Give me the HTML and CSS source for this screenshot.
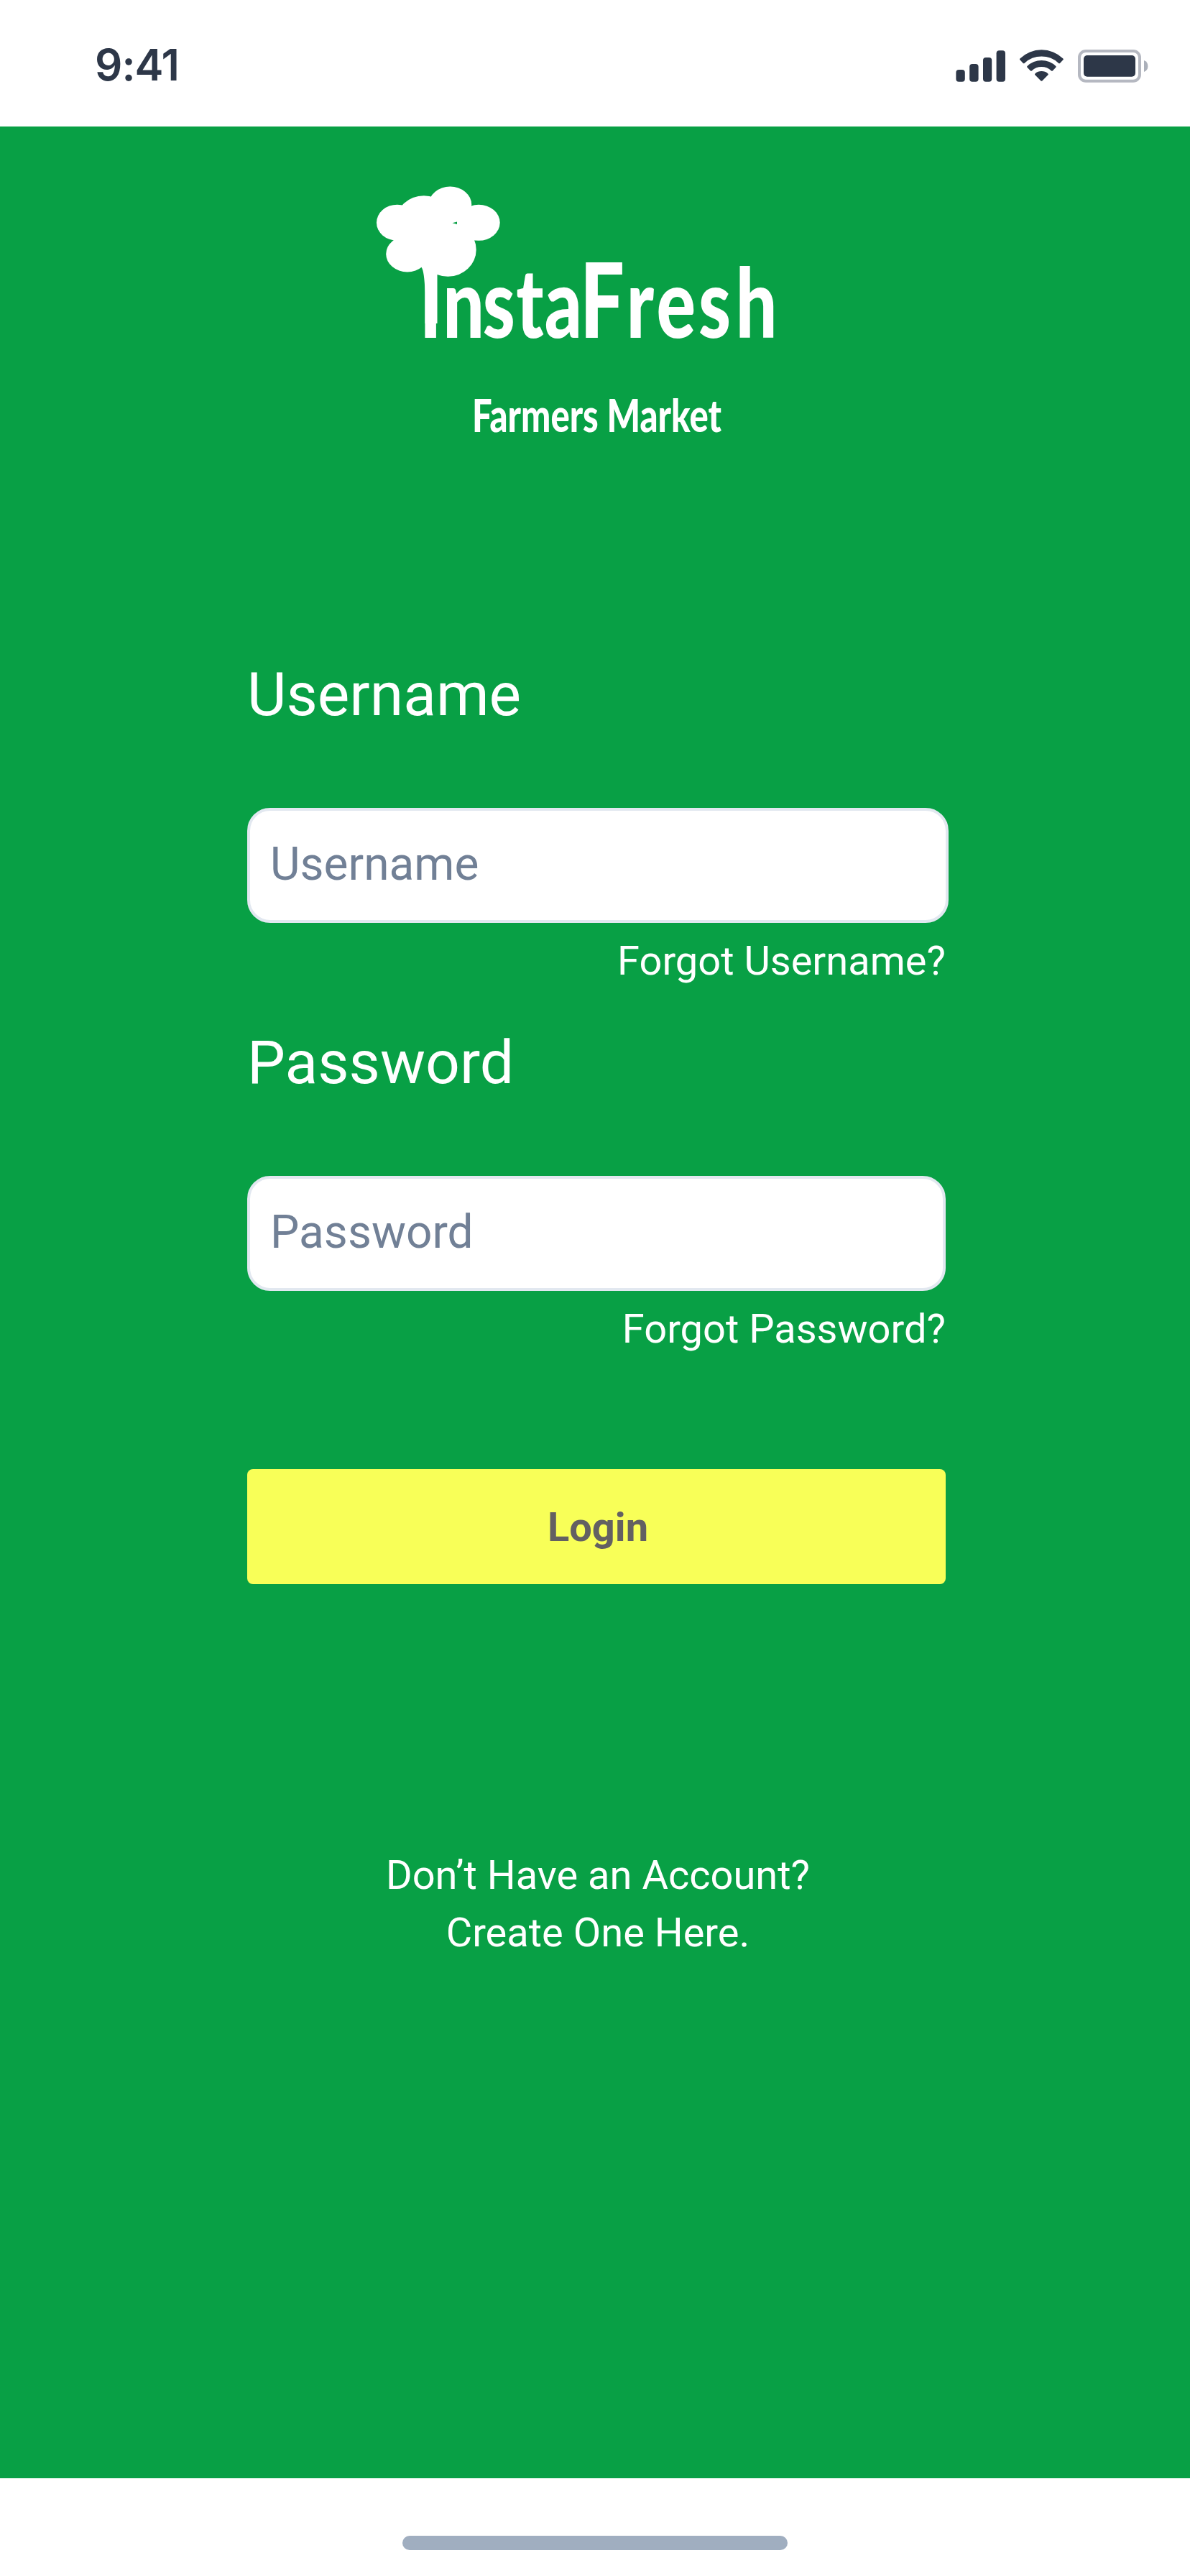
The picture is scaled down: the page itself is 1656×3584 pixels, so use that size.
FILE: index.html
```html
<!DOCTYPE html>
<html lang="en">
<head>
<meta charset="utf-8">
<title>InstaFresh Login</title>
<link rel="stylesheet" href="styles.css">
</head>
<body>
<header class="status-bar">
  <span class="time">9:41</span>
  <svg class="status-icons" width="270" height="50" viewBox="1330 67 270 50">
    <g fill="#2d3748">
      <rect x="1330.4" y="97" width="12.4" height="16.7" rx="4"/>
      <rect x="1349.2" y="89" width="12.4" height="24.7" rx="4"/>
      <rect x="1368" y="80" width="12.2" height="33.7" rx="4"/>
      <rect x="1386.6" y="70.3" width="12.4" height="43.4" rx="4"/>
      <path d="M1419.4 81.5a43 43 0 0 1 60 0q.9.9 0 1.8l-4.4 4.6q-.9.9-1.8 0a34.5 34.5 0 0 0-47.6 0q-.9.9-1.8 0l-4.4-4.6q-.9-.9 0-1.8z"/>
      <path d="M1429.5 92a28.5 28.5 0 0 1 39.8 0q.9.9 0 1.8l-4.5 4.6q-.9.9-1.8 0a20 20 0 0 0-27.2 0q-.9.9-1.8 0l-4.5-4.6q-.9-.9 0-1.8z"/>
      <path d="M1440.4 102.4a14 14 0 0 1 18 0q.9.9 0 1.8l-8.1 8.2q-.9.9-1.8 0l-8.1-8.2q-.9-.9 0-1.8z"/>
      <rect x="1508" y="77" width="72" height="29.8" rx="5"/>
    </g>
    <rect x="1502" y="71" width="84" height="41.8" rx="9" fill="none" stroke="#b5b8c1" stroke-width="4"/>
    <path d="M1592 84a8.6 8.6 0 0 1 0 16z" fill="#abb0ba"/>
  </svg>
</header>
<main class="screen">
  <svg class="logo" width="556" height="360" viewBox="524 256 556 360">
    <g fill="#fff">
      <ellipse cx="552.8" cy="309.7" rx="28.8" ry="25"/>
      <ellipse cx="666.2" cy="309.8" rx="29.5" ry="25"/>
      <ellipse cx="626.4" cy="284.6" rx="29.8" ry="25"/>
      <ellipse cx="566.8" cy="353.4" rx="29.6" ry="25"/>
      <ellipse cx="589.8" cy="309.4" rx="39.3" ry="37.2"/>
      <ellipse cx="623.4" cy="347.4" rx="39.3" ry="37.4"/>
      <path d="M575 300h70v30h-70z"/>
      <path d="M580 360L586.6 372Q590.5 377 591.5 407V450H608.5V376L604 360Z"/>
    </g>
    <path d="M629.5 310.3l6.5-1.9v3.5z" fill="#08a045"/>
    <g class="brand">
      <text class="wordmark" y="470" transform="scale(.76 1)" x="768 811 884 945 997 1062 1147 1202 1279 1347">Insta<tspan class="wordmark-cap">F</tspan>resh</text>
      <text class="tagline" x="657" y="600.5" textLength="347" lengthAdjust="spacingAndGlyphs">Farmers Market</text>
    </g>
  </svg>
  <form class="login-form">
    <div class="field">
      <label class="label" for="username">Username</label>
      <input class="input input-wide" id="username" type="text" placeholder="Username">
      <a class="forgot">Forgot Username?</a>
    </div>
    <div class="field">
      <label class="label" for="password">Password</label>
      <input class="input" id="password" type="password" placeholder="Password">
      <a class="forgot">Forgot Password?</a>
    </div>
    <button class="login-button" type="button">Login</button>
    <p class="signup">Don’t Have an Account?<br>Create One Here.</p>
  </form>
</main>
<footer class="home-bar"><div class="home-indicator"></div></footer>
</body>
</html>
```
FILE: styles.css
```css
* { box-sizing: border-box; }

body {
  margin: 0;
  width: 1656px;
  height: 3584px;
  display: flex;
  flex-direction: column;
  background: #fff;
  font-family: Roboto, "Liberation Sans", sans-serif;
}

.status-bar {
  height: 176px;
  padding: 0 56px 0 132px;
  display: flex;
  justify-content: space-between;
  align-items: flex-start;
}

.time {
  margin-top: 50px;
  font: 600 60px/80px Inter, sans-serif;
  letter-spacing: -1px;
  color: #2d3748;
}

.status-icons { margin-top: 67px; }

.screen {
  flex: 1;
  padding: 80px 336px 0 344px;
  background: #08a045;
  color: #fff;
}

.logo {
  display: block;
  margin-left: 180px;
  overflow: visible;
}

.brand {
  fill: #fff;
  font-family: Lato, sans-serif;
  font-weight: 900;
}

.wordmark { font-size: 134px; }
.wordmark-cap { font-size: 144px; }
.tagline { font-size: 62px; }

.login-form {
  margin-top: 291px;
  display: flex;
  flex-direction: column;
}

.field {
  display: flex;
  flex-direction: column;
}

.field + .field { margin-top: 42px; }

.label {
  font-size: 84px;
  line-height: 120px;
}

.input {
  width: 972px;
  height: 160px;
  margin: 97px 0 0;
  padding: 0 28px 4px;
  border: 4px solid #e2e8f0;
  border-radius: 32px;
  background: #fff;
  font: 400 64px/96px Roboto, sans-serif;
  color: #718096;
}

.input-wide { width: 976px; }

.input::placeholder {
  color: #718096;
  opacity: 1;
}

.forgot {
  width: 972px;
  margin-top: 13px;
  font-size: 56px;
  line-height: 80px;
  text-align: right;
}

.login-button {
  width: 972px;
  height: 160px;
  margin: 155px 0 0;
  padding: 2px 0 0 4px;
  border: 0;
  border-radius: 8px;
  background: #f8ff58;
  font: 700 56px/80px Roboto, sans-serif;
  color: #636062;
}

.signup {
  margin: 365px 0 0;
  font-size: 56px;
  line-height: 80px;
  text-align: center;
}

.home-bar {
  height: 136px;
  padding-top: 80px;
}

.home-indicator {
  width: 536px;
  height: 20px;
  margin: 0 auto;
  border-radius: 10px;
  background: #a0aec0;
}
```
